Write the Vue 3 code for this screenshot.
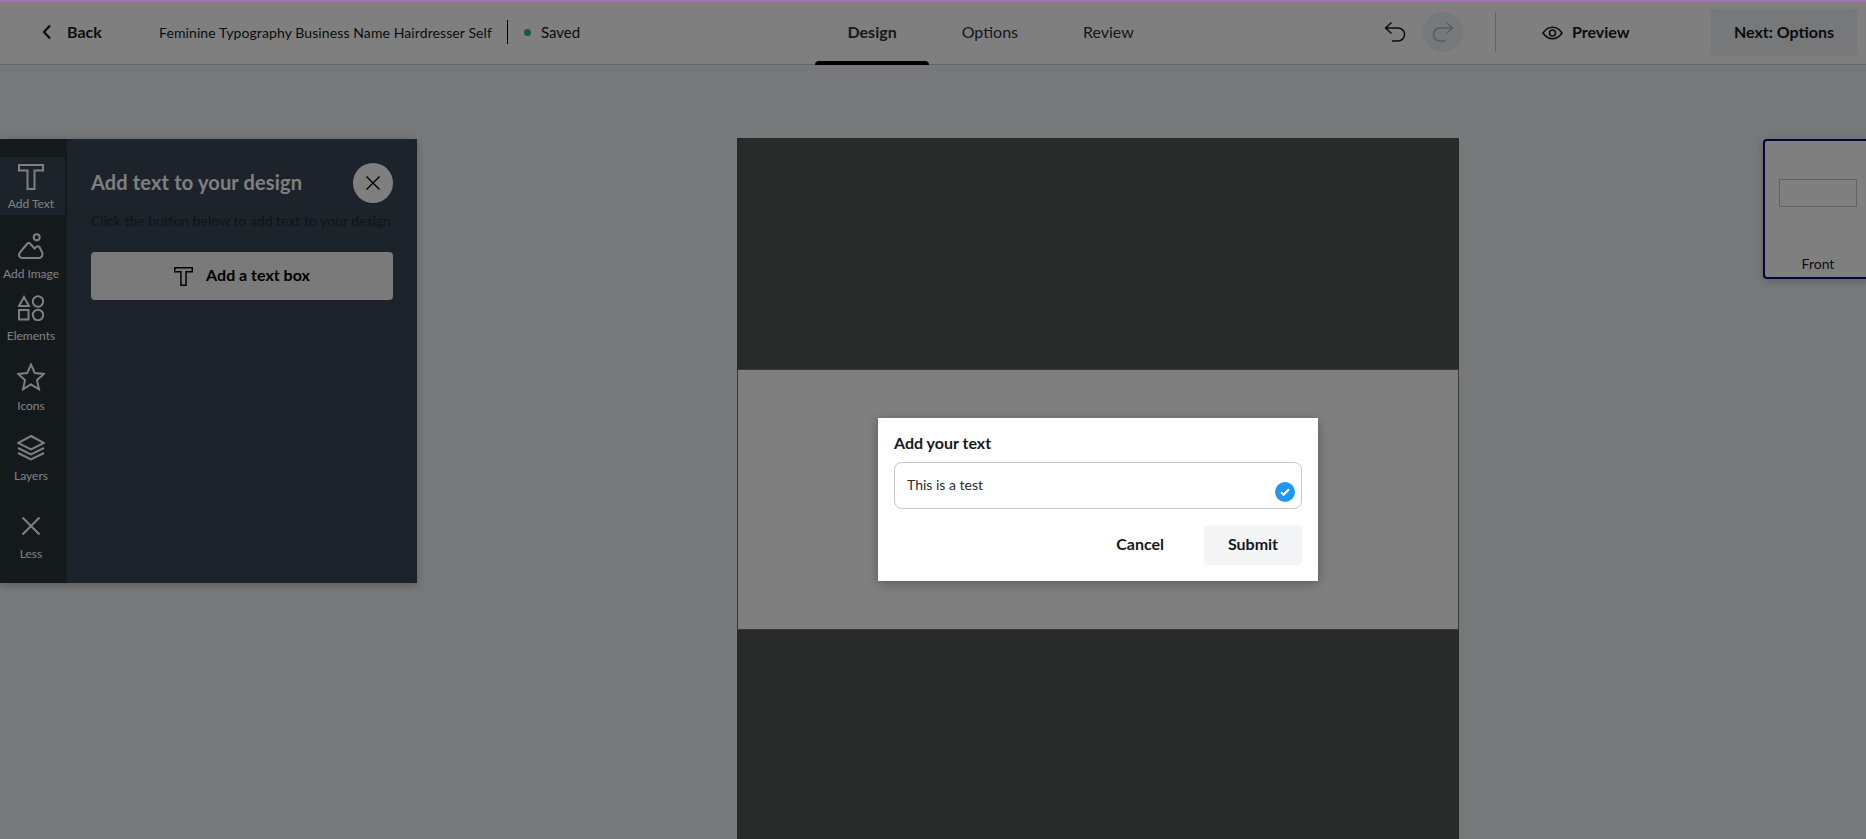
<script setup>
const tabs = ['Design', 'Options', 'Review']
</script>

<template>
  <div class="page">
    <header class="topbar">
      <div class="left">
        <button class="back">
          <svg width="10" height="16" viewBox="0 0 10 16" class="chev"><path d="M8 1.500 2 8l6 6.500" /></svg>
          <span>Back</span>
        </button>
        <span class="doc-name">Feminine Typography Business Name Hairdresser Self</span>
        <i class="vline"></i>
        <i class="dot"></i>
        <span class="saved">Saved</span>
      </div>
      <nav class="tabs">
        <a v-for="(tab, i) in tabs" :key="tab" class="tab" :class="{ active: i === 0 }">{{ tab }}</a>
      </nav>
      <div class="right">
        <svg class="undo" width="22" height="22" viewBox="0 0 22 22"><path d="M7.500 1.500 1.500 7l6 5.500M1.500 7H14a6.200 6.200 0 0 1 0 13H8" /></svg>
        <span class="redo">
          <svg width="22" height="22" viewBox="0 0 22 22"><path d="M14.500 1.500 20.500 7l-6 5.500M20.500 7H8a6.200 6.200 0 0 0 0 13h6" /></svg>
        </span>
        <i class="vline light"></i>
        <button class="preview">
          <svg width="21" height="14" viewBox="0 0 21 14"><path d="M1 7c2.500-3.800 5.700-5.800 9.500-5.800S17.500 3.200 20 7c-2.500 3.800-5.700 5.800-9.500 5.800S3.500 10.800 1 7Z" /><circle cx="10.500" cy="7" r="3" /></svg>
          <span>Preview</span>
        </button>
        <button class="next">Next: Options</button>
      </div>
    </header>

    <main class="studio">
      <aside class="panel">
        <div class="rail">
          <div class="rail-item active">
            <svg width="26" height="26" viewBox="0 0 26 26"><path d="M1 1H25V6.500H16.500V25H9.500V6.500H1Z" /></svg>
            <span>Add Text</span>
          </div>
          <div class="rail-item image">
            <svg width="26" height="26" viewBox="0 0 26 26"><path d="M4.500 25C1.200 25 0 21.800 2 19.300L9 11c1-1.200 2.500-1.200 3.500 0l4 4.500 1.800-1.600c1-.9 2.400-.8 3.300.3l2.400 4.800c1.300 2.800-.2 6-3 6Z" /><circle cx="18.700" cy="4.300" r="3" /></svg>
            <span>Add Image</span>
          </div>
          <div class="rail-item elements">
            <svg width="26" height="26" viewBox="0 0 26 26"><path d="M6 2 11 11H1Z" /><circle cx="20" cy="6.500" r="5.200" /><rect x="1" y="15" width="9.500" height="9.500" /><circle cx="20" cy="20" r="5.200" /></svg>
            <span>Elements</span>
          </div>
          <div class="rail-item icons">
            <svg width="28" height="28" viewBox="0 0 28 28"><path d="m14 1.500 3.800 8.600 9 .9-6.800 6.100 2 9.200L14 21.500l-8 4.800 2-9.200L1.200 11l9-.9Z" /></svg>
            <span>Icons</span>
          </div>
          <div class="rail-item layers">
            <svg width="28" height="26" viewBox="0 0 28 26"><path d="M14 1 27 8 14 14.500 1 8Z" /><path d="m1 13 13 6.500L27 13" /><path d="m1 18 13 6.500L27 18" /></svg>
            <span>Layers</span>
          </div>
          <div class="rail-item less">
            <svg width="20" height="20" viewBox="0 0 20 20"><path d="M1.500 1.500 18.500 18.500M18.500 1.500 1.500 18.500" /></svg>
            <span>Less</span>
          </div>
        </div>
        <div class="panel-body">
          <div class="panel-head">
            <h2>Add text to your design</h2>
            <button class="close">
              <svg width="16" height="16" viewBox="0 0 16 16"><path d="M1.500 1.500 14.500 14.500M14.500 1.500 1.500 14.500" /></svg>
            </button>
          </div>
          <p class="hint">Click the button below to add text to your design</p>
          <button class="add-box">
            <svg width="19" height="19" viewBox="0 0 26 26"><path d="M1 1H25V6.500H16.500V25H9.500V6.500H1Z" /></svg>
            <span>Add a text box</span>
          </button>
        </div>
      </aside>

      <section class="canvas">
        <div class="bleed"></div>
        <div class="safe"></div>
        <div class="bleed low"></div>
      </section>

      <aside class="thumb">
        <div class="thumb-box"></div>
        <span>Front</span>
      </aside>
    </main>

    <div class="overlay"></div>

    <form class="dialog" @submit.prevent>
      <label>Add your text</label>
      <div class="field">
        <span>This is a test</span>
        <i class="ok">
          <svg width="10" height="8" viewBox="0 0 10 8"><path d="M1 4.200 3.600 6.800 9 1.200" /></svg>
        </i>
      </div>
      <div class="actions">
        <button type="button" class="cancel">Cancel</button>
        <button type="submit" class="submit">Submit</button>
      </div>
    </form>
  </div>
</template>

<style>
html, body { margin: 0; overflow: hidden; }
</style>

<style scoped>
.page {
  position: relative;
  width: 1866px;
  height: 839px;
  overflow: hidden;
  display: flex;
  flex-direction: column;
  background: #eef0f4;
  font-family: Lato, "Open Sans", sans-serif;
  color: #15191d;
}

button {
  border: 0;
  background: none;
  font: inherit;
  color: inherit;
  padding: 0;
}

svg { display: block; fill: none; stroke: currentColor; stroke-width: 2; }
i { display: block; }

/* top bar */
.topbar {
  position: relative;
  display: flex;
  align-items: stretch;
  height: 65px;
  flex: none;
  box-sizing: border-box;
  background: #fff;
  border-bottom: 1px solid #c4c6ca;
}
.topbar::before {
  content: "";
  position: absolute;
  z-index: 5;
  top: 0;
  left: 0;
  right: 0;
  height: 2px;
  background: #a56dc4;
}
.left {
  display: flex;
  align-items: center;
  width: 815px;
  flex: none;
  padding-left: 42px;
  box-sizing: border-box;
}
.back {
  display: flex;
  align-items: center;
  gap: 15px;
  width: 117px;
  font-size: 16px;
  font-weight: 700;
}
.back span { padding-bottom: 2px; }
.chev { stroke-width: 2.200; }
.doc-name { font-size: 14px; letter-spacing: .1px; width: 348px; white-space: nowrap; }
.vline { width: 1px; height: 24px; background: #000; }
.dot { width: 7px; height: 7px; border-radius: 50%; background: #2fb573; margin: 0 10px 0 16px; }
.saved { font-size: 15px; }

.tabs { display: flex; }
.tab {
  padding: 0 32.500px;
  font-size: 16px;
  line-height: 64px;
  height: 64px;
  position: relative;
  color: #2c3136;
}
.tab.active { font-weight: 700; }
.tab.active::after {
  content: "";
  position: absolute;
  left: 0;
  right: 0;
  bottom: -1px;
  height: 4px;
  border-radius: 4px 4px 0 0;
  background: #000;
}

.right {
  display: flex;
  align-items: center;
  margin-left: auto;
  padding-right: 9px;
}
.undo { margin-right: 17px; stroke-width: 1.500; }
.redo {
  display: flex;
  align-items: center;
  justify-content: center;
  width: 40px;
  height: 40px;
  border-radius: 50%;
  background: #eef0f4;
  color: #b4b7bb;
  margin-right: 32px;
}
.redo svg { stroke-width: 1.500; }
.vline.light { height: 40px; background: #c6c8cc; }
.preview {
  display: flex;
  align-items: center;
  gap: 9px;
  margin-left: 46px;
  width: 169px;
  font-size: 16px;
  font-weight: 700;
}
.preview span { padding-bottom: 2px; }
.preview svg { margin-top: 1px; stroke-width: 1.600; }
.next {
  width: 146px;
  height: 47px;
  padding-bottom: 2px;
  border-radius: 4px;
  background: #eef0f4;
  font-size: 16px;
  font-weight: 700;
}

/* studio */
.studio {
  flex: 1;
  display: flex;
  align-items: flex-start;
  padding-top: 74px;
  min-height: 0;
}
.panel {
  display: flex;
  width: 417px;
  height: 444px;
  flex: none;
  background: #384656;
  box-shadow: 0 2px 8px rgba(0, 0, 0, .25);
}
.rail {
  width: 67px;
  flex: none;
  background: #283238;
  padding-top: 18px;
  box-sizing: border-box;
}
.rail-item {
  display: flex;
  flex-direction: column;
  align-items: center;
  width: 65px;
  padding-right: 3px;
  color: #fff;
  font-size: 12px;
  box-sizing: border-box;
}
.rail-item span { line-height: 16px; white-space: nowrap; }
.rail-item.active { height: 58px; padding-top: 7px; background: #384656; }
.rail-item.active span { margin-top: 6px; }
.rail-item.image { margin-top: 18px; }
.rail-item.image span { margin-top: 7px; }
.rail-item.elements { margin-top: 13px; }
.rail-item.elements span { margin-top: 7px; }
.rail-item.icons { margin-top: 19px; }
.rail-item.icons span { margin-top: 7px; }
.rail-item.layers { margin-top: 21px; }
.rail-item.layers span { margin-top: 7px; }
.rail-item.less { margin-top: 32px; }
.rail-item.less span { margin-top: 10px; }

.panel-body {
  flex: 1;
  padding: 24px 24px 0;
}
.panel-head {
  display: flex;
  align-items: center;
  justify-content: space-between;
  height: 40px;
}
.panel-head h2 {
  margin: 0 0 2px;
  font-size: 20px;
  letter-spacing: .15px;
  font-weight: 700;
  color: #fff;
}
.close {
  display: flex;
  align-items: center;
  justify-content: center;
  width: 40px;
  height: 40px;
  border-radius: 50%;
  background: #fff;
  color: #000;
}
.close svg { stroke-width: 1.400; }
.hint {
  margin: 8px 0 0;
  font-size: 14px;
  line-height: 20px;
  color: #22272d;
  white-space: nowrap;
}
.add-box {
  display: flex;
  align-items: center;
  justify-content: center;
  gap: 13px;
  width: 100%;
  height: 48px;
  margin-top: 21px;
  border-radius: 4px;
  background: #f4f4f4;
  color: #000;
  font-size: 16px;
  font-weight: 700;
}
.add-box span { padding-bottom: 3px; }
.add-box svg { stroke-width: 2; }

.canvas {
  width: 722px;
  margin-left: 320px;
  margin-top: -1px;
  flex: none;
  display: flex;
  flex-direction: column;
}
.bleed { height: 231px; background: #535755; }
.bleed.low { height: 240px; }
.safe {
  height: 261px;
  box-sizing: border-box;
  background: #fff;
  border: 1px solid #6e7270;
}

.thumb {
  display: flex;
  flex-direction: column;
  align-items: center;
  width: 108px;
  height: 140px;
  margin-left: 304px;
  flex: none;
  box-sizing: border-box;
  border: 2px solid #0a0a6e;
  border-right: 0;
  border-radius: 4px 0 0 4px;
  background: #fff;
  box-shadow: 0 2px 8px rgba(0, 0, 0, .2);
  font-size: 14px;
  color: #222;
}
.thumb-box {
  width: 78px;
  height: 28px;
  margin-top: 38px;
  box-sizing: border-box;
  border: 1px solid #c4c4c4;
}
.thumb span { margin-top: 48px; }

.overlay {
  position: absolute;
  inset: 0;
  background: rgba(0, 0, 0, .5);
}

/* modal */
.dialog {
  position: absolute;
  left: 878px;
  top: 418px;
  width: 440px;
  height: 163px;
  box-sizing: border-box;
  padding: 16px;
  background: #fff;
  box-shadow: 0 2px 10px rgba(0, 0, 0, .3);
}
.dialog label {
  display: block;
  font-size: 16px;
  font-weight: 700;
  line-height: 18px;
  color: #15191d;
}
.field {
  position: relative;
  height: 47px;
  margin-top: 10px;
  padding: 12px 12px;
  box-sizing: border-box;
  border: 1px solid #c8c8c8;
  border-radius: 8px;
  font-size: 14px;
  line-height: 20px;
  color: #2b2d30;
}
.ok {
  position: absolute;
  right: 6px;
  bottom: 6px;
  display: flex;
  align-items: center;
  justify-content: center;
  width: 20px;
  height: 20px;
  border-radius: 50%;
  background: #2196f3;
  color: #fff;
}
.actions {
  display: flex;
  justify-content: flex-end;
  align-items: center;
  margin-top: 16px;
}
.cancel, .submit {
  height: 40px;
  padding-bottom: 3px;
  font-size: 16px;
  font-weight: 700;
  color: #15191d;
}
.cancel { margin-right: 40px; }
.submit {
  width: 98px;
  border-radius: 4px;
  background: #f4f5f7;
}
</style>
